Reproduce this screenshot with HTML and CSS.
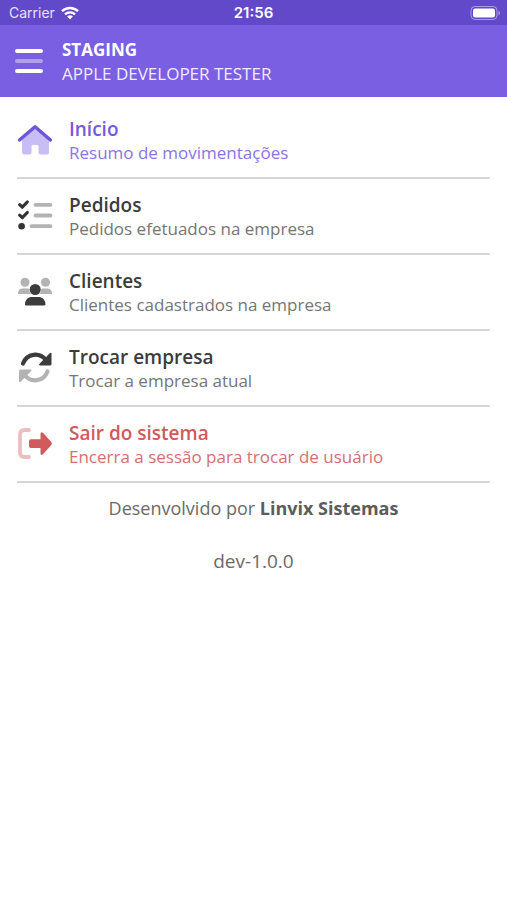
FILE: index.html
```
<!DOCTYPE html>
<html lang="pt-BR">
<head>
    <meta charset="utf-8">
    <meta name="viewport" content="width=device-width, initial-scale=1">
    <title>Menu</title>
    <link rel="stylesheet" href="styles.css">
</head>
<body>

<div class="status-bar">
    <div class="carrier">
        <span>Carrier</span>
        <svg width="18" height="14" viewBox="0 0 18 14" fill="none" stroke="#fff" stroke-width="2.4">
            <path d="M1 5.2a11.5 11.5 0 0 1 16 0"/>
            <path d="M4 8.4a7.2 7.2 0 0 1 10 0"/>
            <path d="M9 13.6L6.1 10.6a4.2 4.2 0 0 1 5.8 0z" fill="#fff" stroke="none"/>
        </svg>
    </div>
    <div class="time">21:56</div>
    <div class="battery">
        <svg width="31" height="14" viewBox="0 0 31 14">
            <rect x="1" y="0.5" width="26" height="13" rx="4" fill="none" stroke="#fff" stroke-opacity="0.45"/>
            <rect x="3" y="2.5" width="22" height="9" rx="2.2" fill="#fff"/>
            <path d="M28.5 4.8c2 .8 2 3.6 0 4.4z" fill="#fff" fill-opacity="0.5"/>
        </svg>
    </div>
</div>

<header>
    <button class="menu-button" type="button" aria-label="Menu">
        <svg width="28" height="26" viewBox="0 0 28 26" fill="none" stroke="#fff" stroke-width="4" stroke-linecap="round">
            <path d="M2 3h24M2 23h24"/>
            <path d="M2 13h24" stroke-opacity="0.4"/>
        </svg>
    </button>
    <div>
        <h1>STAGING</h1>
        <p>APPLE DEVELOPER TESTER</p>
    </div>
</header>

<nav>
    <a class="active" href="#inicio">
        <svg width="36" height="36" viewBox="0 0 36 36" fill="none">
            <path d="M18 7L5 18v13.500q0 2 2 2h5.500q2 0 2-2V25q0-1 1-1h5q1 0 1 1v6.500q0 2 2 2H30q2 0 2-2V18z" fill="#c9bdf5"/>
            <path d="M2.500 19L18 5.700 33.500 19" stroke="#6f55d9" stroke-width="3.400" stroke-linecap="round" stroke-linejoin="round"/>
        </svg>
        <div>
            <h2>Início</h2>
            <p>Resumo de movimentações</p>
        </div>
    </a>
    <a href="#pedidos">
        <svg width="36" height="36" viewBox="0 0 36 36" fill="none" stroke-linecap="round">
            <path d="M2.700 7.600l2.600 2.600 5-5.200M2.700 18.100l2.600 2.600 5-5.200" stroke="#333" stroke-width="3.200" stroke-linejoin="round"/>
            <circle cx="4.600" cy="29.200" r="3.300" fill="#333"/>
            <path d="M18.500 7.800H33.500M18.500 18.500H33.500M14.500 29.200H33.500" stroke="#b3b3b3" stroke-width="3.800"/>
        </svg>
        <div>
            <h2>Pedidos</h2>
            <p>Pedidos efetuados na empresa</p>
        </div>
    </a>
    <a href="#clientes">
        <svg width="36" height="36" viewBox="0 0 36 36">
            <g fill="#b3b3b3">
                <circle cx="8" cy="9.300" r="4.500"/>
                <circle cx="28.500" cy="9.300" r="4.500"/>
                <path d="M1 20.500q0-5 5-5h4.500q1.300 0 2 .5c-.2 2 .2 3.500 1.500 5H1.800q-.8 0-.8-.5z"/>
                <path d="M35 20.500q0-5-5-5h-4q-1.300 0-2 .5c.2 2-.2 3.500-1.500 5h11.700q.8 0 .8-.5z"/>
            </g>
            <g fill="#3c3c3c">
                <circle cx="18.200" cy="16.500" r="5.500"/>
                <path d="M8 31.200c0-4.600 3.300-7.200 7-7.200h6.400c3.700 0 7 2.600 7 7.200q0 1.300-1.300 1.300H9.300Q8 32.500 8 31.200z"/>
            </g>
        </svg>
        <div>
            <h2>Clientes</h2>
            <p>Clientes cadastrados na empresa</p>
        </div>
    </a>
    <a href="#trocar-empresa">
        <svg width="36" height="36" viewBox="0 0 36 36" fill="none" stroke-width="4.200" stroke-linecap="round">
            <path d="M6 14.500C10 4 22.500 3 29 11" stroke="#3c3c3c"/>
            <path d="M33 4q1.500-.8 1.500.8V15q0 1.500-1.500 1.500H23q-1.700 0-.7-1.400z" fill="#3c3c3c"/>
            <path d="M30.500 22.500C26.500 33 14 34 7.500 26" stroke="#b3b3b3"/>
            <path d="M3.500 33q-1.500.8-1.500-.8V22q0-1.500 1.500-1.500h10q1.700 0 .7 1.400z" fill="#b3b3b3"/>
        </svg>
        <div>
            <h2>Trocar empresa</h2>
            <p>Trocar a empresa atual</p>
        </div>
    </a>
    <a class="logout" href="#sair">
        <svg width="36" height="36" viewBox="0 0 36 36">
            <path d="M12 5H7.500Q3 5 3 9.500v18q0 4.500 4.500 4.500H12" fill="none" stroke="#ebbfc1" stroke-width="3.800" stroke-linecap="round"/>
            <path d="M14 14.300h9.500V9q0-3 2.500-1.200l8.300 9.200q1.400 1.500 0 3L26 29.200q-2.500 1.800-2.500-1.200v-5.100H14q-2 0-2-2v-4.600q0-2 2-2z" fill="#d05a5c"/>
        </svg>
        <div>
            <h2>Sair do sistema</h2>
            <p>Encerra a sessão para trocar de usuário</p>
        </div>
    </a>
</nav>

<footer>
    <p>Desenvolvido por <strong>Linvix Sistemas</strong></p>
    <p class="version">dev-1.0.0</p>
</footer>

</body>
</html>
```
FILE: styles.css
```
body {
    font-family: "Open Sans", sans-serif;
    margin: 0;
    background-color: #fff;
}

h1, h2, p {
    margin: 0;
}

svg {
    display: block;
    flex: none;
}

.status-bar {
    display: grid;
    grid-template-columns: 1fr auto 1fr;
    align-items: center;
    height: 25px;
    padding: 0 6px;
    background-color: #6249c9;
    color: #fff;
    font-family: Inter, sans-serif;
    font-size: 14px;
}

.carrier {
    display: flex;
    align-items: center;
    gap: 6px;
    padding-left: 3px;
    color: #e6e0fa;
}

.time {
    font-size: 15px;
    font-weight: 600;
}

.battery {
    justify-self: end;
}

header {
    display: flex;
    align-items: center;
    gap: 19px;
    height: 72px;
    padding: 0 15px;
    background-color: #7a5fe2;
    color: #fff;
}

.menu-button {
    padding: 0;
    border: none;
    background: none;
    cursor: pointer;
}

header h1 {
    font-size: 17px;
    line-height: 24px;
    font-weight: 700;
}

header p {
    font-size: 17px;
    line-height: 24px;
    color: #f0ecfd;
}

header div {
    padding-top: 2px;
}

nav {
    padding: 6px 17px 0;
}

nav a {
    display: flex;
    align-items: center;
    gap: 16px;
    height: 72px;
    padding-bottom: 2px;
    border-bottom: 2px solid #d6d6d6;
    color: #3c3c3c;
    text-decoration: none;
}

nav div {
    padding-top: 4px;
}

nav h2 {
    font-size: 19px;
    line-height: 24px;
    font-weight: 600;
}

nav p {
    font-size: 17px;
    line-height: 24px;
    color: #757575;
}

nav .active h2 {
    color: #7459dc;
}

nav .active p {
    color: #8a73e6;
}

nav .logout h2 {
    color: #d05a5c;
}

nav .logout p {
    color: #d56f72;
}

footer {
    padding-top: 12px;
    text-align: center;
    color: #6a6a6a;
    font-size: 18px;
    line-height: 27px;
}

footer strong {
    color: #5c5c5c;
}

.version {
    margin-top: 26px;
    font-size: 19px;
}
```
